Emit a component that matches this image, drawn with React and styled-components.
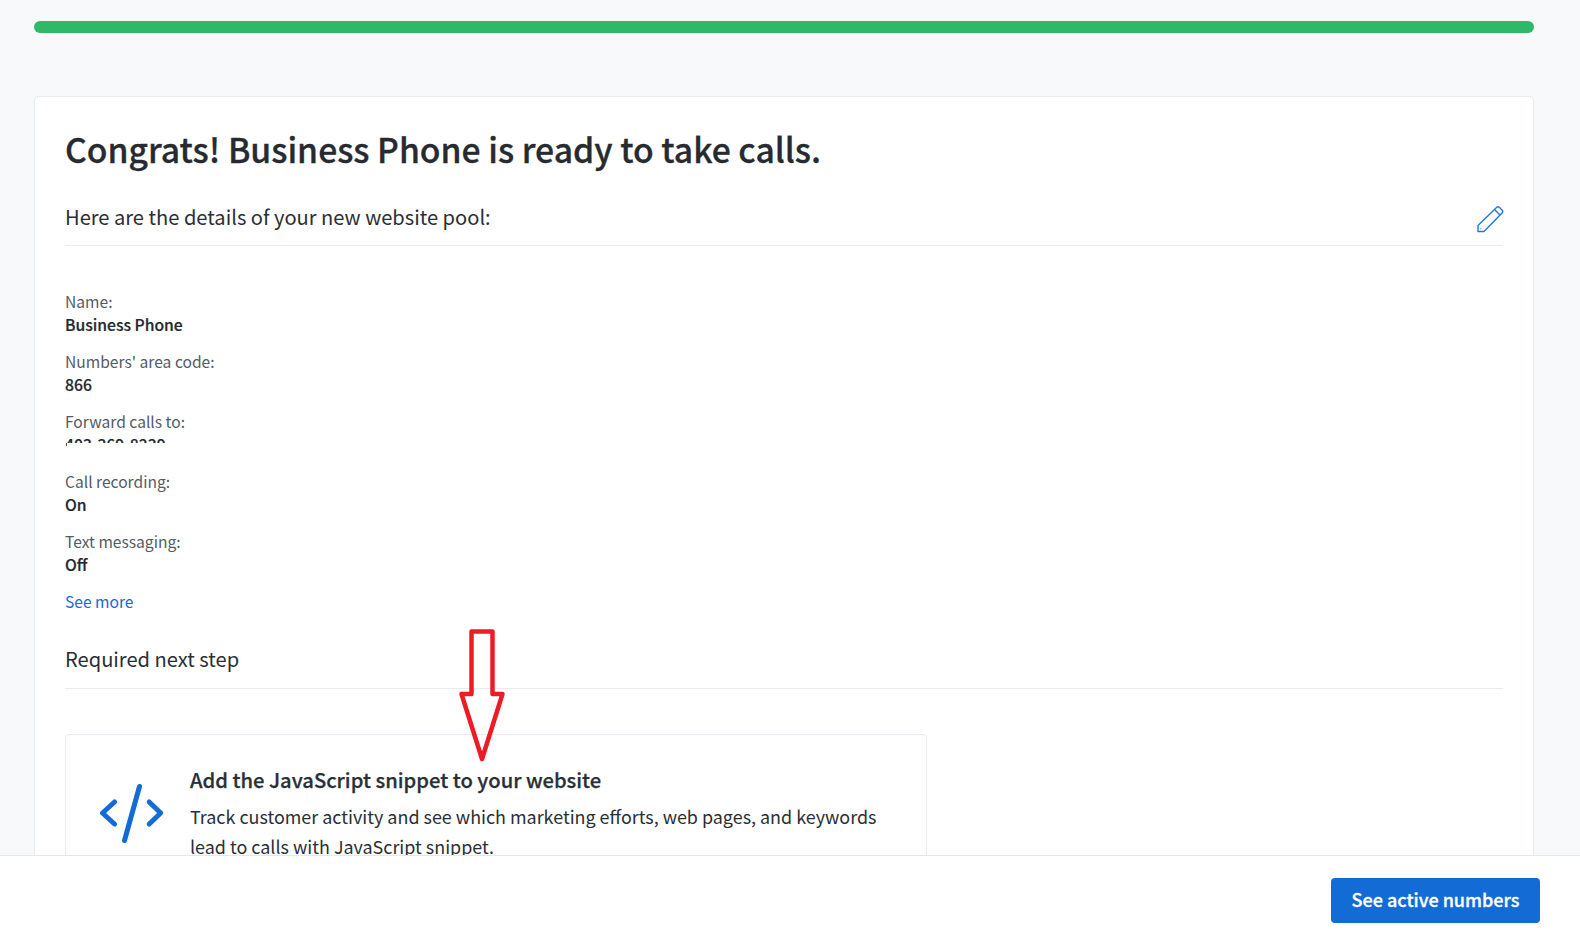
import React from "react";
import styled, { createGlobalStyle } from "styled-components";

const details = [
  { label: "Name:", value: "Business Phone" },
  { label: "Numbers' area code:", value: "866" },
  { label: "Forward calls to:", value: "403-369-8239", hidden: true },
  { label: "Call recording:", value: "On" },
  { label: "Text messaging:", value: "Off" },
];

function App() {
  return (
    <Page>
      <GlobalStyle />
      <Progress />
      <Card>
        <Title>Congrats! Business Phone is ready to take calls.</Title>
        <SectionHead>
          <SectionTitle>Here are the details of your new website pool:</SectionTitle>
          <EditIcon width="28" height="28" viewBox="0 0 28 28" fill="none" stroke="#1f7ae0" strokeWidth="1.4" strokeLinejoin="round">
            <path d="M2 26.5 L2 20.5 L20.5 2.5 Q22 1 23.5 2.5 L26 5 Q27.5 6.5 26 8 L8 26.5 Z" />
            <path d="M18.5 4.5 L24 10" />
            <path d="M4.5 23.5 L5 24" />
          </EditIcon>
        </SectionHead>
        <DetailList>
          {details.map((item) => (
            <Detail key={item.label}>
              <DetailLabel>{item.label}</DetailLabel>
              <DetailValue $hidden={item.hidden}>{item.value}</DetailValue>
              {item.hidden && <CutMark />}
            </Detail>
          ))}
        </DetailList>
        <SeeMore href="#">See more</SeeMore>
        <NextHead>
          <SectionTitle>Required next step</SectionTitle>
        </NextHead>
        <StepCard>
          <svg width="66" height="64" viewBox="0 0 66 64" fill="none" stroke="#136bd5" strokeWidth="5" strokeLinecap="round" strokeLinejoin="round">
            <path d="M15.5 21 L3.5 32 L15.5 43" />
            <path d="M50.2 21 L61.7 32 L50.2 43" />
            <path d="M40.5 5.5 L25.5 59.5" />
          </svg>
          <StepText>
            <StepTitle>Add the JavaScript snippet to your website</StepTitle>
            <StepBody>
              Track customer activity and see which marketing efforts, web pages, and keywords
              lead to calls with JavaScript snippet.
            </StepBody>
          </StepText>
        </StepCard>
      </Card>
      <Arrow width="50" height="138" viewBox="0 0 50 138" fill="none" stroke="#ed1c24" strokeWidth="4.5" strokeLinejoin="round">
        <path d="M16.5 6.5 H37.5 V69 H47.5 L27 134 L6.5 69 H16.5 Z" />
      </Arrow>
      <Footer>
        <PrimaryButton>See active numbers</PrimaryButton>
      </Footer>
    </Page>
  );
}

export default App;

const GlobalStyle = createGlobalStyle`
  html, body {
    margin: 0;
    height: 100%;
    overflow: hidden;
    background: #f8f9fb;
  }
  * {
    box-sizing: border-box;
  }
  body {
    font-family: "Noto Sans CJK SC", "Noto Sans", sans-serif;
    color: #2a2f36;
  }
`;

const Page = styled.div`
  position: relative;
  height: 934px;
  overflow: hidden;
  padding: 21px 46px 0 34px;
`;

const Progress = styled.div`
  height: 12px;
  border-radius: 6px;
  background: #30b868;
`;

const Card = styled.div`
  margin-top: 63px;
  padding: 29px 30px 30px;
  background: #fff;
  border: 1px solid #e8ebf0;
  border-radius: 4px;
`;

const Title = styled.h1`
  margin: 0;
  font-size: 33.7px;
  line-height: 46px;
  font-weight: 500;
  -webkit-text-stroke: 0.3px #272b31;
  color: #272b31;
`;

const SectionHead = styled.div`
  display: flex;
  justify-content: space-between;
  align-items: center;
  height: 74px;
  padding-top: 28px;
  padding-bottom: 12px;
  border-bottom: 1px solid #e8ebf0;
`;

const SectionTitle = styled.div`
  font-size: 20.1px;
  line-height: 30px;
  font-weight: 400;
`;

const EditIcon = styled.svg`
  margin-top: 4px;
  margin-right: -1px;
`;

const DetailList = styled.div`
  display: flex;
  flex-direction: column;
  gap: 14px;
  margin-top: 44px;
`;

const Detail = styled.div`
  position: relative;
`;

const DetailLabel = styled.div`
  font-size: 15.6px;
  line-height: 23px;
  color: #545b66;
`;

const DetailValue = styled.div`
  font-size: 15.7px;
  line-height: 23px;
  font-weight: 500;
  -webkit-text-stroke: 0.2px #24282e;
  color: #24282e;
  ${(props) => props.$hidden && "height: 10px; overflow: hidden; margin-bottom: 13px;"}
`;

const CutMark = styled.span`
  position: absolute;
  left: 1px;
  top: 33px;
  width: 1px;
  height: 3px;
  background: #4a4a4a;
`;

const SeeMore = styled.a`
  display: block;
  margin-top: 14px;
  font-size: 15.6px;
  line-height: 23px;
  color: #136bd5;
  text-decoration: none;
`;

const NextHead = styled.div`
  margin-top: 31px;
  padding-bottom: 14px;
  border-bottom: 1px solid #e8ebf0;
`;

const StepCard = styled.div`
  display: flex;
  align-items: center;
  gap: 25px;
  width: 862px;
  margin-top: 45px;
  padding: 30px 33px;
  border: 1px solid #e8ebf0;
  border-radius: 4px;
`;

const StepText = styled.div`
  flex: 1;
`;

const StepTitle = styled.div`
  font-size: 20.2px;
  line-height: 30px;
  font-weight: 500;
  -webkit-text-stroke: 0.25px #2a2f36;
`;

const StepBody = styled.div`
  margin-top: 6px;
  font-size: 17.93px;
  line-height: 30px;
`;

const Arrow = styled.svg`
  position: absolute;
  left: 455px;
  top: 625px;
`;

const Footer = styled.div`
  position: absolute;
  left: 0;
  right: 0;
  bottom: 0;
  height: 79px;
  display: flex;
  justify-content: flex-end;
  align-items: flex-start;
  padding: 22px 40px 0 0;
  background: #fff;
  border-top: 1px solid #e4e8ee;
`;

const PrimaryButton = styled.button`
  width: 209px;
  height: 45px;
  padding: 0 0 4px;
  border: none;
  border-radius: 4px;
  background: #136bd5;
  color: #fff;
  font-family: inherit;
  font-size: 18px;
  font-weight: 500;
  -webkit-text-stroke: 0.3px #fff;
`;
